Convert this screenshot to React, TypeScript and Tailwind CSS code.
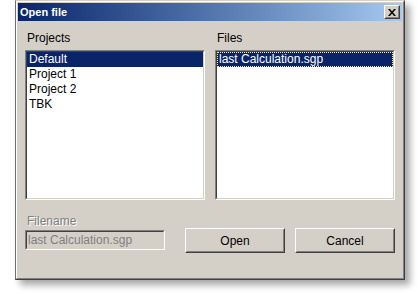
import React from 'react'

const font = { fontFamily: '"Liberation Sans", Arial, sans-serif' }

function Raised({ children, className = '' }: { children?: React.ReactNode; className?: string }) {
  // classic 3D button edge
  return (
    <div className={`border border-t-white border-l-white border-r-[#404040] border-b-[#404040] bg-[#d4d0c8] ${className}`}>
      <div className="w-full h-full border border-t-[#d4d0c8] border-l-[#d4d0c8] border-r-[#808080] border-b-[#808080] flex items-center justify-center">
        {children}
      </div>
    </div>
  )
}

function Sunken({ children, className = '' }: { children?: React.ReactNode; className?: string }) {
  return (
    <div className={`border border-t-[#808080] border-l-[#808080] border-r-white border-b-white ${className}`}>
      <div className="w-full h-full border border-t-[#404040] border-l-[#404040] border-r-[#d4d0c8] border-b-[#d4d0c8] overflow-hidden">
        {children}
      </div>
    </div>
  )
}

function ListBox({ items, selected, focus }: { items: string[]; selected: number; focus?: boolean }) {
  return (
    <Sunken className="w-[180px] h-[150px]">
      <div className="w-full h-full bg-white">
        {items.map((it, i) => (
          <div
            key={it}
            className={`h-[15px] leading-[13px] pl-[1px] text-[12px] whitespace-nowrap ${
              i === selected ? 'bg-[#0a246a] text-white' : 'text-black'
            } ${i === selected && focus ? 'border border-dotted border-[#f4e8a8]' : 'border border-transparent'}`}
          >
            {it}
          </div>
        ))}
      </div>
    </Sunken>
  )
}

export default function App() {
  return (
    <div className="w-[420px] h-[295px] bg-white pl-[15px]" style={font}>
      <div className="w-[390px] h-[280px] border border-t-[#d4d0c8] border-l-[#6f6f6f] border-r-[#404040] border-b-[#404040] bg-[#d4d0c8] shadow-[5px_5px_7px_rgba(0,0,0,0.35)]">
        <div className="w-full h-full border border-t-white border-l-white border-r-[#808080] border-b-[#808080] p-[1px] flex flex-col">
          {/* title bar */}
          <div className="h-[18px] flex items-center justify-between pl-[2px] pr-[2px] bg-gradient-to-r from-[#0a246a] to-[#a6caf0]">
            <span className="text-white font-bold text-[11px] leading-none">Open file</span>
            <Raised className="w-[16px] h-[14px]">
              <svg width="8" height="7" viewBox="0 0 8 7">
                <path d="M0 0h2l2 2.5L6 0h2L5 3.5 8 7H6L4 4.5 2 7H0l3-3.5z" fill="#000" />
              </svg>
            </Raised>
          </div>

          {/* body */}
          <div className="flex-1 px-[7px] pt-[10px]">
            <div className="grid grid-cols-[180px_180px] gap-x-[10px]">
              <div className="flex flex-col">
                <div className="text-[12px] leading-[15px] h-[19px] pl-[2px] text-black">Projects</div>
                <ListBox items={['Default', 'Project 1', 'Project 2', 'TBK']} selected={0} />
              </div>
              <div className="flex flex-col">
                <div className="text-[12px] leading-[15px] h-[19px] pl-[2px] text-black">Files</div>
                <ListBox items={['last Calculation.sgp']} selected={0} focus />
              </div>
            </div>

            <div className="mt-[14px] flex items-end">
              <div className="flex flex-col w-[140px]">
                <div className="text-[12px] leading-[15px] h-[16px] pl-[2px] text-[#808080] [text-shadow:1px_1px_0_#fff]">
                  Filename
                </div>
                <Sunken className="w-[140px] h-[20px]">
                  <div className="w-full h-full bg-[#d4d0c8] text-[12px] leading-[16px] pl-[1px] text-[#808080] whitespace-nowrap">
                    last Calculation.sgp
                  </div>
                </Sunken>
              </div>
              <div className="flex gap-[10px] ml-[20px] mb-[-3px]">
                <Raised className="w-[100px] h-[25px]">
                  <span className="text-[12px] text-black">Open</span>
                </Raised>
                <Raised className="w-[100px] h-[25px]">
                  <span className="text-[12px] text-black">Cancel</span>
                </Raised>
              </div>
            </div>
          </div>
        </div>
      </div>
    </div>
  )
}
